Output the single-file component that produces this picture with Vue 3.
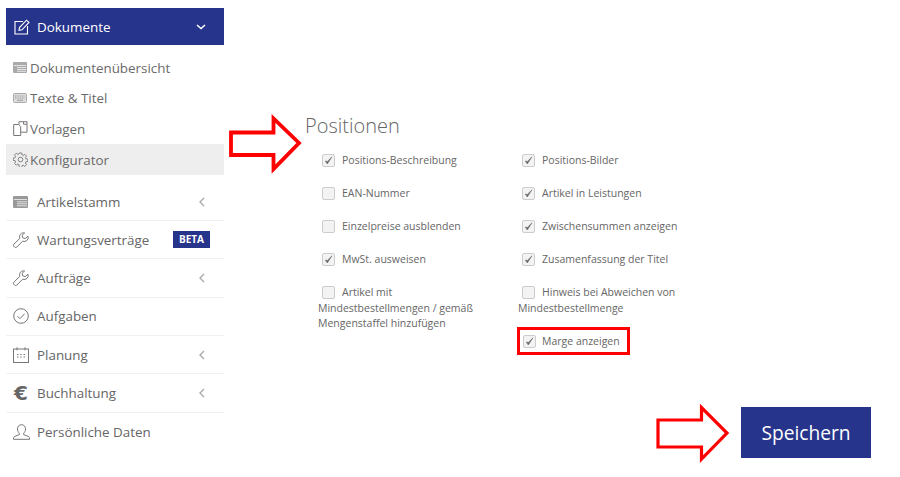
<script setup>
const subItems = [
  { label: 'Dokumentenübersicht', icon: 'table' },
  { label: 'Texte & Titel', icon: 'keyboard' },
  { label: 'Vorlagen', icon: 'files' },
  { label: 'Konfigurator', icon: 'gear', active: true },
]
const mainItems = [
  { label: 'Artikelstamm', icon: 'tablebig', chevron: true },
  { label: 'Wartungsverträge', icon: 'wrench', badge: 'BETA' },
  { label: 'Aufträge', icon: 'wrench', chevron: true },
  { label: 'Aufgaben', icon: 'check' },
  { label: 'Planung', icon: 'calendar', chevron: true },
  { label: 'Buchhaltung', icon: 'euro', chevron: true },
  { label: 'Persönliche Daten', icon: 'user' },
]
const options = [
  { label: 'Positions-Beschreibung', on: true },
  { label: 'Positions-Bilder', on: true },
  { label: 'EAN-Nummer', on: false },
  { label: 'Artikel in Leistungen', on: true },
  { label: 'Einzelpreise ausblenden', on: false },
  { label: 'Zwischensummen anzeigen', on: true },
  { label: 'MwSt. ausweisen', on: true },
  { label: 'Zusamenfassung der Titel', on: true },
  { label: 'Artikel mit Mindestbestellmengen / gemäß Mengenstaffel hinzufügen', on: false },
  { label: 'Hinweis bei Abweichen von Mindestbestellmenge', on: false },
]
</script>

<template>
  <div class="page">
    <aside class="sidebar">
      <div class="head">
        <svg class="head-icon" width="16" height="16" viewBox="0 0 16 16" fill="none" stroke="#fff" stroke-width="1.1">
          <path d="M9 2.5H1v12.5h12.5V7" />
          <path d="M5.5 8.5 12.5 1.2 15 3.5 8 10.8l-3 .6z" />
        </svg>
        <span class="head-label">Dokumente</span>
        <svg class="head-chev" width="10" height="6" viewBox="0 0 10 6" fill="none" stroke="#fff" stroke-width="1.5">
          <path d="M1 1l4 3.6L9 1" />
        </svg>
      </div>

      <ul class="sub">
        <li v-for="s in subItems" :key="s.label" class="sub-row" :class="{ active: s.active }">
          <span class="sub-icon">
            <svg v-if="s.icon === 'table'" width="14" height="11" viewBox="0 0 14 11">
              <rect width="14" height="11" rx="1" fill="#aaa" />
              <path d="M1 3.5h12M4 5.5h9M4 7.5h9M4 9.3h9" stroke="#f2f2f2" stroke-width=".8" />
            </svg>
            <svg v-else-if="s.icon === 'keyboard'" width="14" height="10" viewBox="0 0 14 10">
              <rect x=".5" y=".5" width="13" height="9" rx="1" fill="#ddd" stroke="#aaa" />
              <path d="M2 3h10M2 5h10" stroke="#999" stroke-dasharray="1 .7" />
              <path d="M4 7.2h6" stroke="#999" />
            </svg>
            <svg v-else-if="s.icon === 'files'" width="15" height="15" viewBox="0 0 15 15" fill="none" stroke="#777">
              <path d="M.7 3.5h5l2 2v9H.7z" />
              <path d="M6 3.5V.7h4.5l3.5 0v10.5H7.7" />
              <path d="M10.5.7v2.5H14" />
            </svg>
            <svg v-else width="15" height="15" viewBox="0 0 15 15" fill="none" stroke="#777" stroke-width=".9">
              <circle cx="7.5" cy="7.5" r="2.3" />
              <path d="M6.3 1h2.4l.3 1.9 1.2.5 1.6-1.1 1.7 1.7-1.1 1.6.5 1.2 1.9.3v2.4l-1.9.3-.5 1.2 1.1 1.6-1.7 1.7-1.6-1.1-1.2.5-.3 1.9H6.3L6 12.6l-1.2-.5-1.6 1.1-1.7-1.7 1.1-1.6-.5-1.2L.2 8.4V6l1.9-.3.5-1.2L1.5 2.9l1.7-1.7 1.6 1.1L6 1.9z" />
            </svg>
          </span>
          <span class="sub-label">{{ s.label }}</span>
        </li>
      </ul>

      <ul class="main-nav">
        <li v-for="m in mainItems" :key="m.label" class="nav-row">
          <span class="nav-icon">
            <svg v-if="m.icon === 'tablebig'" width="15" height="12" viewBox="0 0 15 12">
              <rect width="15" height="12" rx="1" fill="#999" />
              <path d="M1 3.5h13M4 5.8h10M4 7.8h10M4 9.8h10" stroke="#f2f2f2" stroke-width=".8" />
            </svg>
            <svg v-else-if="m.icon === 'wrench'" width="16" height="16" viewBox="0 0 16 16" fill="none" stroke="#777" stroke-width="1">
              <path d="M10.5 .8a4 4 0 0 0-3.7 5.5L.9 12.2a1.6 1.6 0 0 0 0 2.2l.7.7a1.6 1.6 0 0 0 2.2 0l5.9-5.9A4 4 0 0 0 15 4.2l-2.7 2.4-2.6-.8-.6-2.5L11.6 1z" />
            </svg>
            <svg v-else-if="m.icon === 'check'" width="16" height="16" viewBox="0 0 16 16" fill="none" stroke="#777" stroke-width="1">
              <circle cx="8" cy="8" r="7.3" />
              <path d="M4.5 8.2 7 10.7l4.6-5" />
            </svg>
            <svg v-else-if="m.icon === 'calendar'" width="16" height="16" viewBox="0 0 16 16" fill="none" stroke="#777" stroke-width="1">
              <rect x=".5" y="2" width="15" height="13.5" />
              <path d="M4 .3v3M12 .3v3" />
              <path d="M4 7.5h1.5M7.2 7.5h1.5M10.5 7.5h1.5M4 10h1.5M7.2 10h1.5M10.5 10h1.5" stroke-width="1.2" />
            </svg>
            <span v-else-if="m.icon === 'euro'" class="euro">€</span>
            <svg v-else width="17" height="16" viewBox="0 0 17 16" fill="none" stroke="#777" stroke-width="1">
              <path d="M8.5.7c-2.6 0-4 2-4 4.3 0 1.8.8 3.3 1.8 4.1v1.5L1.2 12.7c-.5.3-.7.7-.7 1.2v1.4h16v-1.4c0-.5-.2-.9-.7-1.2l-5.1-2.1V9.1c1-.8 1.8-2.3 1.8-4.1 0-2.3-1.4-4.3-4-4.3z" />
            </svg>
          </span>
          <span class="nav-label">{{ m.label }}</span>
          <span v-if="m.badge" class="badge">{{ m.badge }}</span>
          <svg v-if="m.chevron" class="nav-chev" width="6" height="10" viewBox="0 0 6 10" fill="none" stroke="#aaa" stroke-width="1.4">
            <path d="M5 1 1 5l4 4" />
          </svg>
        </li>
      </ul>
    </aside>

    <main class="content">
      <h2 class="title">Positionen</h2>
      <div class="options">
        <label v-for="o in options" :key="o.label" class="opt">
          <span class="box" :class="{ on: o.on }">
            <svg v-if="o.on" width="9" height="9" viewBox="0 0 9 9"><path d="M1.2 5 3.3 8 8 .8 3.4 5.4z" fill="#666" stroke="#666" stroke-width=".5" /></svg>
          </span>{{ o.label }}
        </label>
        <span></span>
        <label class="opt marked">
          <span class="box on">
            <svg width="9" height="9" viewBox="0 0 9 9"><path d="M1.2 5 3.3 8 8 .8 3.4 5.4z" fill="#666" stroke="#666" stroke-width=".5" /></svg>
          </span>Marge anzeigen
        </label>
      </div>
      <div class="actions">
        <button class="save" type="button">Speichern</button>
      </div>
    </main>

    <svg class="arrow arrow-a" width="76" height="62" viewBox="0 0 76 62" fill="none" stroke="#f00" stroke-width="3.8">
      <path d="M2 18.5h42.5V4.5L70 29 44.5 55V41H2z" />
    </svg>
    <svg class="arrow arrow-b" width="76" height="62" viewBox="0 0 76 62" fill="none" stroke="#f00" stroke-width="3.2">
      <path d="M2 16h43.5V3.5L71 29 45.5 55V43H2z" />
    </svg>
  </div>
</template>

<style>
html, body { margin: 0; background: #fff; }
</style>

<style scoped>
.page {
  position: relative;
  display: flex;
  height: 477px;
  width: 900px;
  overflow: hidden;
  font-family: "Open Sans", sans-serif;
  color: #666;
}
.sidebar {
  width: 218px;
  margin-left: 6px;
  padding-top: 8px;
  flex: none;
}
.head {
  display: flex;
  align-items: center;
  height: 37px;
  padding-left: 8px;
  background: #27348b;
  color: #fff;
  font-size: 13.4px;
}
.head-label { margin-left: 7px; }
.head-chev { margin-left: auto; margin-right: 18px; }
ul { list-style: none; margin: 0; padding: 0; }
.sub { margin-top: 7.5px; }
.sub-row {
  display: flex;
  align-items: center;
  height: 30.6px;
  padding-left: 7px;
  font-size: 13.4px;
  color: #6a6a6a;
}
.sub-row.active { background: #eee; }
.sub-icon { display: flex; width: 17px; flex: none; }
.main-nav { margin-top: 8px; }
.nav-row {
  display: flex;
  align-items: center;
  height: 38.3px;
  box-sizing: border-box;
  padding-left: 7px;
  font-size: 13.4px;
  border-bottom: 1px solid #f1f1f1;
}
.nav-row:last-child { border-bottom: 0; }
.nav-icon { display: flex; width: 24px; flex: none; align-items: center; }
.euro { font-family: "DejaVu Sans", sans-serif; font-size: 20px; font-weight: 700; line-height: 18px; color: #666; margin-left: 1px; }
.nav-chev { margin-left: auto; margin-right: 19px; }
.badge {
  margin-left: auto;
  margin-right: 14px;
  width: 37px;
  height: 17px;
  background: #27348b;
  color: #fff;
  font-size: 10px;
  font-weight: 700;
  line-height: 17px;
  text-align: center;
}
.content {
  flex: 1;
  padding: 112px 29px 0 81px;
  display: flex;
  flex-direction: column;
}
.title {
  margin: 0 0 13px;
  font-size: 20px;
  line-height: 28px;
  font-weight: 300;
  color: #666;
}
.options {
  margin-left: 13px;
  display: grid;
  grid-template-columns: 200px 200px;
  grid-template-rows: 33px 33px 33px 33px 42px 28px;
  font-size: 10.5px;
}
.opt {
  display: block;
  width: 182px;
  line-height: 15.5px;
  color: #666;
}
.box {
  display: inline-block;
  box-sizing: border-box;
  width: 13px;
  height: 13px;
  margin: 0 7px 0 4px;
  vertical-align: -3px;
  border: 1px solid #ccc;
  border-radius: 2px;
  background: #f3f3f3;
  position: relative;
}
.box svg { position: absolute; left: 1px; top: 1px; }
.marked {
  box-sizing: border-box;
  margin-left: -1px;
  width: 113px;
  height: 28px;
  border: 3px solid #f00;
  line-height: 22px;
  white-space: nowrap;
}
.marked .box { margin: 0 6px 0 3px; }
.actions {
  display: flex;
  justify-content: flex-end;
  margin-top: 52px;
}
.save {
  width: 130px;
  height: 51px;
  border: 0;
  border-radius: 0;
  background: #27348b;
  color: #fff;
  font-family: inherit;
  font-size: 19.2px;
  padding: 0;
}
.arrow { position: absolute; }
.arrow-a { left: 229px; top: 114px; }
.arrow-b { left: 656px; top: 404px; }
</style>
